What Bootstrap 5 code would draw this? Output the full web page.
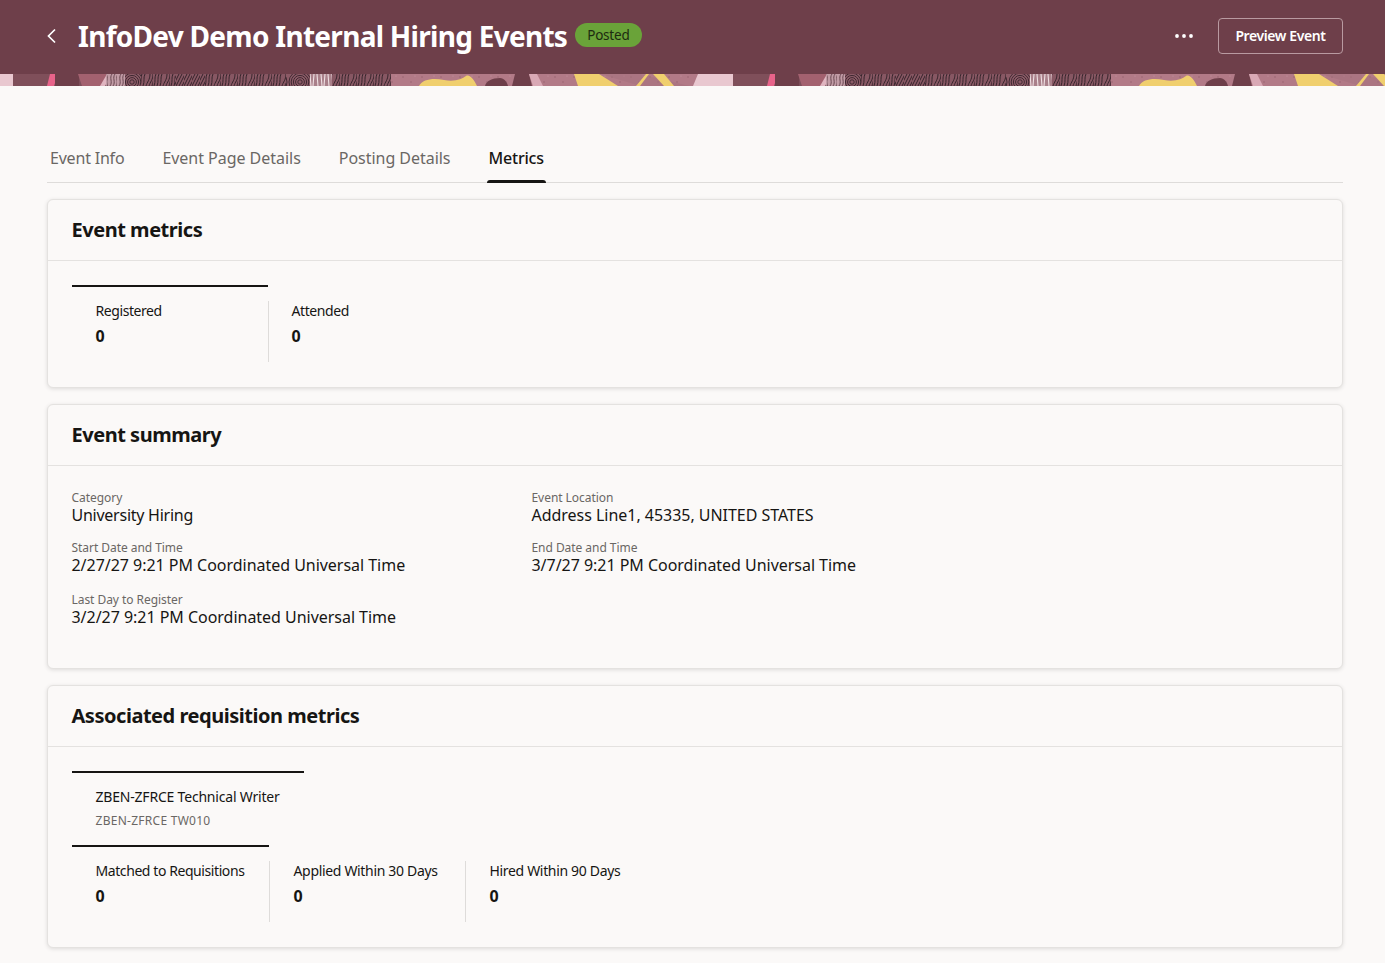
<!DOCTYPE html>
<html lang="en">
<head>
<meta charset="utf-8">
<title>InfoDev Demo Internal Hiring Events</title>
<link href="https://cdn.jsdelivr.net/npm/bootstrap@5.3.0/dist/css/bootstrap.min.css" rel="stylesheet">
<style>
html,body{background:#fbf9f8;}
body{font-family:"Noto Sans","Open Sans",sans-serif;color:#161513;height:963px;overflow:hidden;}
.hero-bar{background:#6e3f4a;height:74px;padding:0 42px 2px 45px;}
.back-link{width:14px;height:20px;margin-right:19px;display:flex;align-items:center;}
.hero-title{font-size:28px;font-weight:700;color:#fff;line-height:36px;margin:0;letter-spacing:-.72px;}
.state-pill{background:#6aa339;color:#1d2b10;font-size:13.5px;line-height:24px;height:24px;border-radius:12px;padding:0 12px;margin-left:8px;letter-spacing:-.2px;margin-top:-2px;}
.more-dots{width:20px;height:6px;margin-right:24px;display:flex;}
.preview-btn{width:125px;height:36px;padding:0 0 2px;font-size:14px;font-weight:600;color:#fff;border:1px solid #b99aa1;border-radius:4px;letter-spacing:-.4px;background:transparent;}
.preview-btn:hover{color:#fff;border-color:#b99aa1;background:transparent;}
.hero-strip{display:block;width:100%;height:12px;}
.page-wrap{padding:48px 42px 0 47px;}
.tab-row{border-bottom:1px solid #dedcda;height:49px;margin-bottom:16px;gap:34px;padding-left:1px;}
.tab-item{font-size:16px;line-height:24px;color:#6a6764;padding:12px 2px 0;height:48px;text-decoration:none;letter-spacing:-.03px;position:relative;}
.tab-tight{letter-spacing:-.2px;}
.tab-item.is-on{color:#161513;font-weight:500;letter-spacing:-.2px;}
.tab-item.is-on::after{content:"";position:absolute;left:0;right:0;bottom:-1px;height:3px;background:#161513;border-radius:3px 3px 0 0;}
.panel{background:#fbf9f8;border:1px solid #e4e2e0;border-radius:6px;box-shadow:0 1px 4px rgba(0,0,0,.12);margin-bottom:16px;}
.panel-head{padding:0 24px;height:61px;background:transparent;border-bottom:1px solid #e4e2e0;display:flex;align-items:center;}
.panel-head h2{font-size:20px;font-weight:700;line-height:28px;margin:0 0 0 -.5px;letter-spacing:-.47px;}
.panel-main{padding:24px 24px 0;}
.panel-one{height:189px;}
.panel-two{height:265px;}
.panel-three{height:263px;}
.tile-top{border-top:2px solid #161513;}
.tile{width:196px;padding:14px 0 0 24px;height:76px;}
.tile-plain{border-top:2px solid transparent;}
.tile-wide{width:197px;}
.tile-narrow{width:195px;}
.tile-wrap{display:flex;}
.tile-sep{width:1px;height:61px;background:#dedcda;margin-top:16px;flex:none;}
.tile-label{font-size:14px;line-height:20px;letter-spacing:-.42px;color:#161513;margin-left:-.5px;}
.tile-loose .tile-label{letter-spacing:-.33px;}
.tile-num{font-size:16px;font-weight:700;line-height:24px;margin-top:3px;margin-left:-.5px;}
.tile-close .tile-label,.tile-close .tile-num{margin-left:-1.5px;}
.req-head{width:232px;height:74px;padding:14px 0 0 24px;}
.req-name{font-size:14px;line-height:20px;letter-spacing:-.2px;margin-left:-.5px;}
.req-code{font-size:12px;line-height:16px;color:#6a6764;margin:6px 0 0 -.5px;letter-spacing:.27px;}
.fact-grid{display:grid;grid-template-columns:460px 460px;margin-left:-.5px;}
.fact{font-size:16px;line-height:18px;letter-spacing:-.03px;}
.fact small{display:block;font-size:12px;line-height:16px;color:#6a6764;letter-spacing:-.05px;}
.fact-tight{letter-spacing:-.25px;}
.fact-one{height:50px;}
.fact-two{height:52px;}
</style>
</head>
<body>
<header>
  <div class="hero-bar d-flex align-items-center">
    <a class="back-link" href="#" aria-label="Back">
      <svg width="14" height="20" viewBox="0 0 14 20"><path d="M10 3.5 3.5 10l6.5 6.5" fill="none" stroke="#fff" stroke-width="1.7"/></svg>
    </a>
    <h1 class="hero-title">InfoDev Demo Internal Hiring Events</h1>
    <span class="state-pill">Posted</span>
    <div class="ms-auto d-flex align-items-center">
      <span class="more-dots"><svg width="20" height="6" viewBox="0 0 20 6"><circle cx="3" cy="3" r="1.9" fill="#fff"/><circle cx="10" cy="3" r="1.9" fill="#fff"/><circle cx="17" cy="3" r="1.9" fill="#fff"/></svg></span>
      <button type="button" class="btn preview-btn">Preview Event</button>
    </div>
  </div>
  <svg class="hero-strip" aria-hidden="true">
    <defs>
      <pattern id="ridges" width="17" height="12" patternUnits="userSpaceOnUse">
        <rect width="17" height="12" fill="#875763"/>
        <path d="M1 12C3 7 1 4 3 0M4 12C6 7 4 4 6 0M7 12C9 7 7 4 9 0M10 12c1-4 4-6 4-12M13 12c1-4 4-6 4-12M16 12c1-4 2-6 2-12" fill="none" stroke="#35232a" stroke-width="1"/>
      </pattern>
      <pattern id="slant" width="8" height="12" patternUnits="userSpaceOnUse">
        <rect width="8" height="12" fill="#875763"/>
        <path d="M-3 12 3 0M0 12 6 0M3 12 9 0M6 12 12 0" fill="none" stroke="#35232a" stroke-width="1"/>
      </pattern>
      <pattern id="rings" width="24" height="12" patternUnits="userSpaceOnUse">
        <rect width="24" height="12" fill="#8b5a66"/>
        <g fill="none" stroke="#35232a" stroke-width=".9"><circle cx="12" cy="8" r="2.2"/><circle cx="12" cy="8" r="4.4"/><circle cx="12" cy="8" r="6.6"/><circle cx="12" cy="8" r="8.8"/><circle cx="12" cy="8" r="11"/></g>
      </pattern>
      <pattern id="thin" width="9" height="12" patternUnits="userSpaceOnUse">
        <rect width="9" height="12" fill="#c29ca6"/>
        <path d="M2 12C5 8 1 4 4 0M5 12C8 8 4 4 7 0M8 12c3-4-1-8 2-12" fill="none" stroke="#5b3a43" stroke-width=".9"/>
      </pattern>
      <pattern id="pale" width="11" height="12" patternUnits="userSpaceOnUse">
        <rect width="11" height="12" fill="#a9808a"/>
        <path d="M2 0 3 12M6 0 5 12M9 0 10 12" stroke="#efe0e3" stroke-width="1.1"/>
      </pattern>
      <pattern id="speck" width="19" height="12" patternUnits="userSpaceOnUse">
        <rect width="19" height="12" fill="#b27a87"/>
        <circle cx="4" cy="3" r=".8" fill="#9a6270"/><circle cx="12" cy="8" r=".8" fill="#9a6270"/><circle cx="16" cy="2" r=".6" fill="#c493a0"/>
      </pattern>
      <pattern id="strip" width="720" height="12" patternUnits="userSpaceOnUse">
        <rect width="720" height="12" fill="#7d4e5a"/>
        <polygon points="0,0 13,0 16,12 0,12" fill="#e9c8d0"/>
        <rect x="13" width="37" height="12" fill="#7f4f5a"/>
        <polygon points="50,0 58,0 54,12 47,12" fill="#e8638a"/>
        <rect x="55" width="24" height="12" fill="#6e3f4a"/>
        <polygon points="78,0 107,0 101,12 82,12" fill="#a3616f"/>
        <polygon points="107,0 112,0 105,12 100,12" fill="#e0b5c0"/>
        <rect x="106" width="19" height="12" fill="url(#thin)"/>
        <rect x="125" width="16" height="12" fill="url(#rings)"/>
        <rect x="141" width="34" height="12" fill="url(#ridges)"/>
        <rect x="175" width="30" height="12" fill="url(#slant)"/>
        <rect x="205" width="81" height="12" fill="url(#ridges)"/>
        <rect x="286" width="24" height="12" fill="url(#rings)"/>
        <rect x="310" width="22" height="12" fill="url(#pale)"/>
        <rect x="332" width="59" height="12" fill="url(#ridges)"/>
        <rect x="391" width="310" height="12" fill="url(#speck)"/>
        <path d="M419 12C423 5 433 4 444 6S462 5 466 2c4-2 8 4 11 10Z" fill="#f0cf6e"/>
        <path d="M485 12c1-5 7-8 15-8 4 0 7 4 8 8Z" fill="#6e3f4a"/>
        <polygon points="515,0 529,0 532,12 512,12" fill="#6e3f4a"/>
        <polygon points="529,0 537,0 543,12 533,12" fill="#d9a9b5"/>
        <polygon points="574,0 599,0 618,12 578,12" fill="#f0cf6e"/>
        <polygon points="600,0 640,0 690,12 640,12" fill="#a5707d" opacity=".55"/>
        <polygon points="646,0 649,0 640,12 636,12" fill="#f0cf6e"/>
        <polygon points="653,0 664,0 674,12 664,12" fill="#f0cf6e"/>
        <polygon points="698,0 720,0 720,12 693,12" fill="#e9c8d0"/>
      </pattern>
    </defs>
    <rect width="100%" height="12" fill="url(#strip)"/>
  </svg>
</header>

<main class="page-wrap">
  <nav class="tab-row d-flex">
    <a class="tab-item tab-tight" href="#">Event Info</a>
    <a class="tab-item" href="#">Event Page Details</a>
    <a class="tab-item" href="#">Posting Details</a>
    <a class="tab-item is-on" href="#">Metrics</a>
  </nav>

  <section class="card panel panel-one">
    <div class="panel-head"><h2>Event metrics</h2></div>
    <div class="panel-main">
      <div class="tile-wrap">
        <div class="tile tile-top"><div class="tile-label">Registered</div><div class="tile-num">0</div></div>
        <div class="tile-sep"></div>
        <div class="tile tile-plain tile-close"><div class="tile-label">Attended</div><div class="tile-num">0</div></div>
      </div>
    </div>
  </section>

  <section class="card panel panel-two">
    <div class="panel-head"><h2>Event summary</h2></div>
    <div class="panel-main">
      <div class="fact-grid">
        <div class="fact fact-one fact-tight"><small>Category</small>University Hiring</div>
        <div class="fact fact-one"><small>Event Location</small>Address Line1, 45335, UNITED STATES</div>
        <div class="fact fact-two"><small>Start Date and Time</small>2/27/27 9:21 PM Coordinated Universal Time</div>
        <div class="fact fact-two"><small>End Date and Time</small>3/7/27 9:21 PM Coordinated Universal Time</div>
        <div class="fact"><small>Last Day to Register</small>3/2/27 9:21 PM Coordinated Universal Time</div>
      </div>
    </div>
  </section>

  <section class="card panel panel-three">
    <div class="panel-head"><h2>Associated requisition metrics</h2></div>
    <div class="panel-main">
      <div class="req-head tile-top">
        <div class="req-name">ZBEN-ZFRCE Technical Writer</div>
        <div class="req-code">ZBEN-ZFRCE TW010</div>
      </div>
      <div class="tile-wrap">
        <div class="tile tile-wide tile-top"><div class="tile-label">Matched to Requisitions</div><div class="tile-num">0</div></div>
        <div class="tile-sep"></div>
        <div class="tile tile-narrow tile-plain tile-loose"><div class="tile-label">Applied Within 30 Days</div><div class="tile-num">0</div></div>
        <div class="tile-sep"></div>
        <div class="tile tile-plain tile-loose"><div class="tile-label">Hired Within 90 Days</div><div class="tile-num">0</div></div>
      </div>
    </div>
  </section>
</main>
<script src="https://cdn.jsdelivr.net/npm/bootstrap@5.3.0/dist/js/bootstrap.bundle.min.js"></script>
</body>
</html>
